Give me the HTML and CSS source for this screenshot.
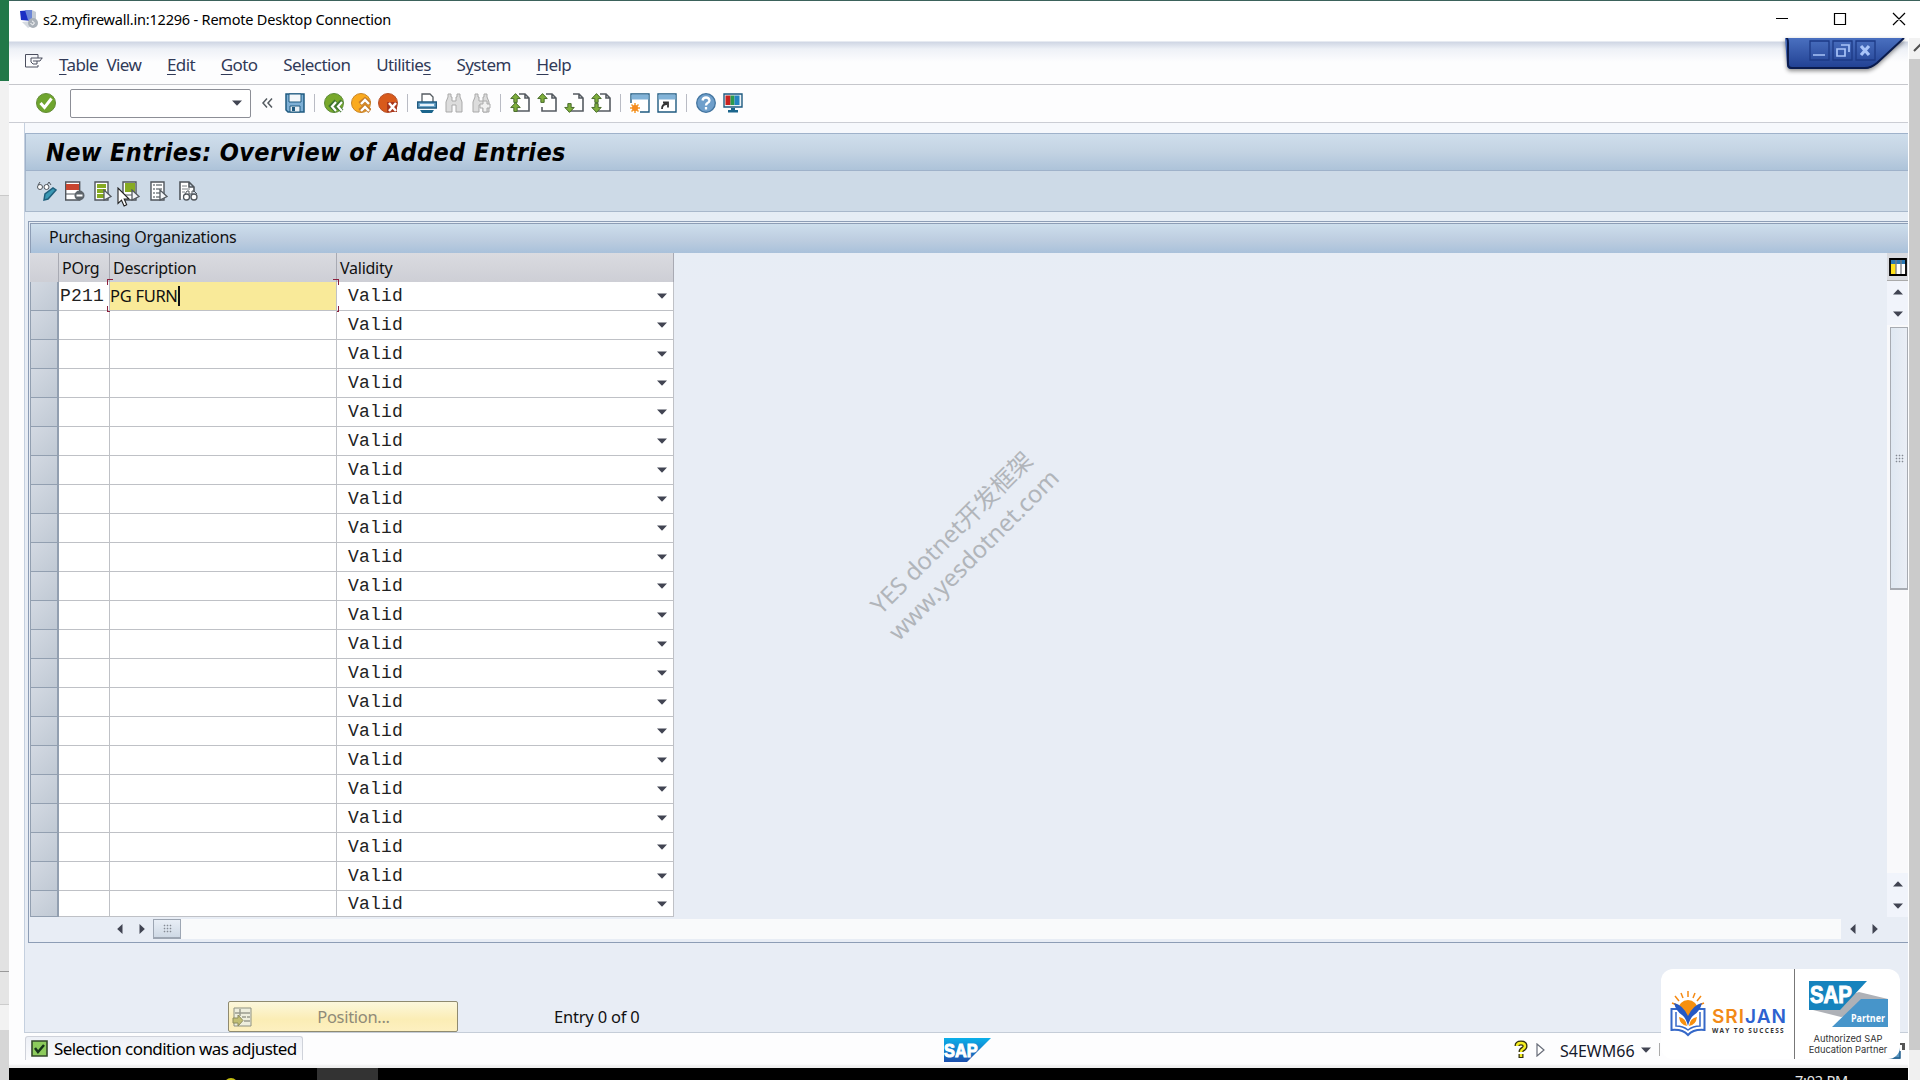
FILE: index.html
```html
<!DOCTYPE html>
<html lang="en">
<head>
  <meta charset="UTF-8">
  <title>s2.myfirewall.in:12296 - Remote Desktop Connection</title>
  <link rel="stylesheet" href="styles.css">
</head>
<body>
  <svg width="0" height="0" class="sprite">
    <linearGradient id="sapblue" x1="0" y1="0" x2="0" y2="1">
      <stop offset="0" stop-color="#0bb0ea"/><stop offset="1" stop-color="#1c4fae"/>
    </linearGradient>
    <symbol id="page" viewBox="0 0 20 20">
      <path d="M9 1h6l4 4v13H5v-4M15 1v4h4" fill="#fff" stroke="#555b61" stroke-width="1.6"/>
    </symbol>
    <symbol id="up" viewBox="0 0 10 9"><path d="M5 .5L9.3 5H6.5v3.5h-3V5H.7z" fill="#7fae3c" stroke="#486b2b" stroke-width=".9"/></symbol>
    <symbol id="bino" viewBox="0 0 20 20">
      <path d="M4 1h3v3h1v4h4V4h1V1h3v3l2 5v10h-6v-7H8v7H2V9l2-5z" fill="#dcdcdc" stroke="#a9a9a9"/>
    </symbol>
    <symbol id="caret" viewBox="0 0 10 6"><path d="M0 .5h10L5 5.8z" fill="#414452"/></symbol>
    <symbol id="play" viewBox="0 0 9 12"><path d="M1 1v10l7-3.500z" fill="#f4f6f8" stroke="#555b61" stroke-width="1.3"/></symbol>
  </svg>

  <div class="desktop">
    <div class="behind">
      <i class="b-green"></i><i class="b-head"></i><i class="b-cells"></i><i class="b-tab"></i><i class="b-light"></i><i class="b-end"></i>
    </div>

    <div class="window">
      <div class="rdp-title">
        <svg class="rdp-icon" viewBox="0 0 20 20">
          <path d="M1 2l12-1v11L2 11z" fill="#1b2fc4"/><path d="M6 1l7 0v11l-4-1z" fill="#6c86d6"/>
          <path d="M13 1l4 2v10l-4-1z" fill="#c3cad4"/><path d="M3 13l9-1 4 3-7 4z" fill="#d5dae1"/>
          <circle cx="14" cy="14" r="5" fill="#a9b0b8"/><path d="M11.500 14l2 2M13 11.800l2.500 2-2 2.500" stroke="#fff" fill="none"/>
        </svg>
        <span class="rdp-text">s2.myfirewall.in:12296 - Remote Desktop Connection</span>
        <svg class="win-controls" viewBox="0 0 136 14" fill="none" stroke="#000" stroke-width="1.2">
          <path d="M1 6.500h12M59.500 1.500h11v11h-11zM118 1l12 12M130 1l-12 12"/>
        </svg>
      </div>

      <div class="content">
        <div class="session">
          <div class="menubar">
            <svg class="menu-icon" viewBox="0 0 18 14" fill="none" stroke="#4b4e5e"><path d="M13 4V.5H.5v12.500H13V11M6 4h11.500M17 4l-2 3h-3v3H8L6 8V4M8 7h4"/></svg>
            <span><u>T</u>able View</span><span><u>E</u>dit</span><span><u>G</u>oto</span><span>Se<u>l</u>ection</span><span>Utilitie<u>s</u></span><span>S<u>y</u>stem</span><span><u>H</u>elp</span>
          </div>

          <div class="toolbar">
            <svg class="ico ok" viewBox="0 0 20 20"><circle cx="10" cy="10" r="9.500" fill="#6fa52e" stroke="#648c37"/><path d="M4.500 10l4 4.500 7-9" fill="none" stroke="#fff" stroke-width="3"/></svg>
            <div class="command"><svg class="caret"><use href="#caret"/></svg></div>
            <svg class="chev" viewBox="0 0 12 12" fill="none" stroke="#555b61" stroke-width="1.500"><path d="M6 1.500L2 6l4 4.500M11 1.500L7 6l4 4.500"/></svg>
            <svg class="ico" viewBox="0 0 20 20"><path d="M1 1h18v18H3l-2-2z" fill="#7fb0d6" stroke="#1f5a80" stroke-width="1.500"/><path d="M4 1h12v8H4z" fill="#f3f7fa" stroke="#1f5a80"/><path d="M5 13h10v6H5z" fill="#e8eff4" stroke="#1f5a80"/><path d="M7 14h3v4H7z" fill="#1f5a80"/></svg>
            <i class="sep"></i>
            <div class="group">
              <svg class="ico" viewBox="0 0 20 20"><circle cx="10" cy="10" r="9.500" fill="#78a82b" stroke="#5b8b38"/><path d="M12 8L7 13l5 5M18 8l-5 5 5 5" fill="none" stroke="#3d7430" stroke-width="4"/><path d="M12 9l-4 4.500 4 4.500M18 9l-4 4.500 4 4.500" fill="none" stroke="#fff" stroke-width="2.200"/></svg>
              <svg class="ico" viewBox="0 0 20 20"><circle cx="10" cy="10" r="9.500" fill="#faaa1e" stroke="#c98526"/><path d="M9 11l5-4 5 4M9 18l5-4 5 4" fill="none" stroke="#c47b2c" stroke-width="5"/><path d="M10 11l4-4 4 4M10 18l4-4 4 4" fill="none" stroke="#fff" stroke-width="2.400"/></svg>
              <svg class="ico" viewBox="0 0 20 20"><circle cx="10" cy="10" r="9.500" fill="#d85a1b" stroke="#b4502a"/><path d="M9 9h10v10H9z" fill="#a8371d"/><path d="M11 10l7 8M18 10l-7 8" stroke="#fff" stroke-width="2.500"/></svg>
            </div>
            <i class="sep"></i>
            <div class="group">
              <svg class="ico" viewBox="0 0 20 20"><path d="M5 9V1h8l3 3v5" fill="#fff" stroke="#555b61" stroke-width="1.300"/><path d="M.7 9h18.600v6H.7z" fill="#6ba4ca" stroke="#1f5a80" stroke-width="1.400"/><path d="M3 12h14" stroke="#e6f2fa" stroke-width="2"/><path d="M3 17h14l-2 3H5z" fill="#1b658c"/></svg>
              <svg class="ico"><use href="#bino"/></svg>
              <svg class="ico" viewBox="0 0 20 20"><use href="#bino"/><path d="M12 8h4v3h3v4h-3v4h-4v-4H9v-4h3z" fill="#f0f0f0" stroke="#aaa"/></svg>
            </div>
            <i class="sep"></i>
            <div class="group">
              <svg class="ico" viewBox="0 0 20 20"><use href="#page"/><use href="#up" width="11" height="10"/><use href="#up" y="9" width="11" height="10"/></svg>
              <svg class="ico" viewBox="0 0 20 20"><use href="#page"/><use href="#up" width="11" height="10"/></svg>
              <svg class="ico" viewBox="0 0 20 20"><use href="#page"/><use href="#up" width="11" height="10" transform="translate(11 20) rotate(180)"/></svg>
              <svg class="ico" viewBox="0 0 20 20"><use href="#page"/><use href="#up" width="11" height="10"/><use href="#up" width="11" height="10" transform="translate(11 20) rotate(180)"/></svg>
            </div>
            <i class="sep"></i>
            <div class="group">
              <svg class="ico" viewBox="0 0 20 20"><path d="M1 1h18v18H1z" fill="#fff" stroke="#1f5a80" stroke-width="1.400"/><path d="M1.500 1.500h17v5h-17z" fill="#82b3d8"/><path d="M0 10h10v10H0z" fill="#fff"/><path d="M5 10v10M0 15h10M1.500 11.500l7 7M8.500 11.500l-7 7" stroke="#f39a2b" stroke-width="1.500"/><circle cx="5" cy="15" r="3" fill="#f58b1f"/></svg>
              <svg class="ico" viewBox="0 0 20 20"><path d="M1 1h18v18H1z" fill="#fff" stroke="#1f5a80" stroke-width="1.400"/><path d="M1.500 1.500h17v5h-17z" fill="#82b3d8"/><path d="M5 16q0-5 5-5M6 9.500h5v5" fill="none" stroke="#333" stroke-width="1.800"/></svg>
            </div>
            <i class="sep"></i>
            <div class="group">
              <svg class="ico" viewBox="0 0 20 20"><circle cx="10" cy="10" r="9.300" fill="#6f9fcb" stroke="#42749f" stroke-width="1.300"/><path d="M6.500 7.500Q7 4.500 10 4.500t3.500 3Q13.500 9 11.500 10 10 11 10 12.500M10 14v2.500" fill="none" stroke="#fff" stroke-width="2.300"/></svg>
              <svg class="ico" viewBox="0 0 20 20"><path d="M1 1h18v13H1z" fill="#eef3f6" stroke="#1f5a80" stroke-width="1.400"/><path d="M2.500 2.500h5v9.500h-5z" fill="#c9211e"/><path d="M7.500 2.500h4v9.500h-4z" fill="#2c9a4b"/><path d="M11.500 2.500h5v9.500h-5z" fill="#2485c0"/><path d="M8 15h4v2h3v2.500H5V17h3z" fill="#1b658c"/></svg>
            </div>
          </div>

          <div class="workspace">
            <h1>New Entries: Overview of Added Entries</h1>
            <div class="app-toolbar">
              <svg class="ico" viewBox="0 0 20 20" fill="none" stroke="#50565c"><circle cx="3" cy="6" r="2.500" fill="#fff"/><circle cx="9.500" cy="6" r="2.500" fill="#fff"/><path d="M1 4l2-3M10 4l2-3 2 3"/><path d="M7 19l1-6 8-6 3 2-8 9z" fill="#3a98b4" stroke="#1f5f7c" stroke-width="1.500"/></svg>
              <svg class="ico" viewBox="0 0 20 20"><path d="M.7 1h14v18H.7z" fill="#fff" stroke="#50565c" stroke-width="1.400"/><path d="M1 3h13v6H1z" fill="#c8452f"/><path d="M1 13h12" stroke="#50565c"/><circle cx="14.500" cy="14.500" r="5" fill="#5d646a"/><path d="M11.500 14.500h6" stroke="#fff" stroke-width="2"/></svg>
              <svg class="ico" viewBox="0 0 20 20"><path d="M2 1h13v18H2z" fill="#fff" stroke="#50565c" stroke-width="1.400"/><path d="M4 3h9v4H4zM4 8h9v4H4zM4 13h8v4H4z" fill="#87ab22"/><use href="#play" x="10" y="8" width="9" height="12"/></svg>
              <svg class="ico" viewBox="0 0 20 20"><path d="M2 1h13v18H2z" fill="#fff" stroke="#50565c" stroke-width="1.400"/><path d="M4 2h10v9H4z" fill="#87ab22"/><path d="M4 14h7" stroke="#50565c"/><use href="#play" x="10" y="8" width="9" height="12"/></svg>
              <svg class="ico" viewBox="0 0 20 20"><path d="M2 1h13v18H2z" fill="#fff" stroke="#50565c" stroke-width="1.400"/><path d="M4 4h2M7 4h6M4 8h2M7 8h6M4 12h2M7 12h4M4 16h2M7 16h4" stroke="#7c8287" stroke-width="1.400"/><use href="#play" x="10" y="8" width="9" height="12"/></svg>
              <svg class="ico last" viewBox="0 0 20 20"><path d="M2 19V1h9l5 5v5M11 1v5h5" fill="#fff" stroke="#50565c" stroke-width="1.600"/><path d="M4 5h5M4 8h8M4 11h3" stroke="#7c8287"/><path d="M7 13l2-3h2v3h3v-3h2l3 3" fill="none" stroke="#50565c"/><circle cx="8.500" cy="16" r="3" fill="#fff" stroke="#50565c" stroke-width="1.300"/><circle cx="16" cy="16" r="3" fill="#fff" stroke="#50565c" stroke-width="1.300"/></svg>
            </div>

            <div class="table-box">
              <div class="box-title">Purchasing Organizations</div>
              <div class="table-area">
                <div class="grid" id="grid">
                  <div class="row head"><span></span><span>POrg</span><span>Description</span><span>Validity</span></div>
                </div>
                <div class="vscroll">
                  <div class="config"><svg viewBox="0 0 18 18"><path d="M1 1h16v16H1z" fill="#fff"/><path d="M1 1h16v5H1z" fill="#2b79b5"/><path d="M1 6h6v11H1z" fill="#ffe11c"/><path d="M7 1v16M12 1v16" stroke="#777c84" stroke-width="1.300"/><path d="M1 1h16v16H1z" fill="none" stroke="#000" stroke-width="1.800"/></svg></div>
                  <div class="arrow"><svg class="caret flip"><use href="#caret"/></svg></div>
                  <div class="arrow"><svg class="caret"><use href="#caret"/></svg></div>
                  <div class="vtrack"><div class="vthumb"><i class="grip"></i></div></div>
                  <div class="arrow"><svg class="caret flip"><use href="#caret"/></svg></div>
                  <div class="arrow"><svg class="caret"><use href="#caret"/></svg></div>
                </div>
              </div>
              <div class="hscroll">
                <svg class="caret left"><use href="#caret"/></svg>
                <svg class="caret right"><use href="#caret"/></svg>
                <div class="htrack"><div class="hthumb"><i class="grip"></i></div></div>
                <svg class="caret left"><use href="#caret"/></svg>
                <svg class="caret right"><use href="#caret"/></svg>
              </div>
            </div>

            <div class="footer">
              <button class="position">
                <svg viewBox="0 0 20 20"><path d="M2 1h17v18H2z" fill="#eeeedd" stroke="#8e9182"/><path d="M3 6h15M8 2v7M10 10h4M15 10h3M12 14h6" stroke="#9a9c8f" stroke-width="1.500"/><path d="M1 11h5V8l5 5.500L6 19v-3H1z" fill="#c2bf74" stroke="#8e8d5f"/></svg>
                <span>Position...</span>
              </button>
              <span class="entry">Entry 0 of 0</span>
            </div>
          </div>

          <div class="statusbar">
            <div class="message">
              <svg viewBox="0 0 17 17"><path d="M1 1h15v15H1z" fill="#8ccb5c" stroke="#33482b" stroke-width="1.600"/><path d="M4 8l3 4 6-7" fill="none" stroke="#17351a" stroke-width="2.500"/></svg>
              <span>Selection condition was adjusted</span>
            </div>
            <svg class="sap-logo" viewBox="0 0 49 25"><path d="M0 0h49L24 25H0z" fill="url(#sapblue)"/><text x="0" y="20" textLength="35" lengthAdjust="spacingAndGlyphs" class="sap-word">SAP</text></svg>
            <div class="system">
              <svg class="hint" viewBox="0 0 14 19"><path d="M3 6q0-3 4-3t4 3q0 2-2 3t-2 3M7 14v4" fill="none" stroke="#34310d" stroke-width="5"/><path d="M3 6q0-3 4-3t4 3q0 2-2 3t-2 3M7 14v3" fill="none" stroke="#f5ee23" stroke-width="2.500"/></svg>
              <svg class="tri" viewBox="0 0 9 14"><path d="M1 1l7 6-7 6z" fill="#fff" stroke="#686d79" stroke-width="1.200"/></svg>
              <span>S4EWM66</span>
              <svg class="caret"><use href="#caret"/></svg>
              <i></i>
            </div>
          </div>
          <div class="taskbar"><i class="dot"></i><i class="task"></i><span>7:02 PM</span></div>
        </div>
        <div class="outer-scroll">
          <svg viewBox="0 0 11 21"><path d="M5 13l6-6 6 6" fill="none" stroke="#505050" stroke-width="2"/></svg>
          <div></div>
        </div>
      </div>
    </div>

    <svg class="mdi" viewBox="0 0 124 38">
      <linearGradient id="mdi" x1="0" y1="0" x2="0" y2="1"><stop offset="0" stop-color="#4a70c0"/><stop offset="1" stop-color="#203f91"/></linearGradient>
      <path d="M1 0h119L92 26q-6 5-12 5H7q-4 0-4-4z" fill="url(#mdi)"/>
      <path d="M2 0q2 0 2 5v21q0 4 4 4h73q6 0 12-5l27-25" fill="none" stroke="#0b1c4e" stroke-width="2"/>
      <g fill="none" stroke="#1d3a86" stroke-width="1.300"><path d="M26 3h19v19H26zM49 3h19v19H49zM72 3h19v19H72z"/></g>
      <g fill="none" stroke="#a9c4f8" stroke-width="1.700"><path d="M29 17h12M53 11h8v7h-8zM57 7h8v7"/><path d="M77 8l8 9M85 8l-8 9" stroke-width="3.200"/></g>
    </svg>

    <div class="watermark">YES dotnet开发框架<br>www.yesdotnet.com</div>

    <svg class="cursor" viewBox="0 0 14 21"><path d="M1 1v15.500l3.500-3.300 2.600 5.800 2.600-1.200L7.200 12H12z" fill="#fff" stroke="#222" stroke-width="1.100"/></svg>

    <svg class="corner" viewBox="0 0 24 26"><path d="M19 10h5v7h-3v-5h-2z" fill="#555"/><path d="M2 26l17-12v12z" fill="#5794bf"/><path d="M3 25h16V18" fill="none" stroke="#245f8d" stroke-width="1.500"/></svg>
    <div class="badge">
      <div class="srijan">
        <svg viewBox="0 0 36 46">
          <g stroke="#f58a14" stroke-width="1.500"><path d="M18 6V0M13 7l-2-5M23 7l2-5M9 10L5 5M27 10l4-5M7 14l-5-2M29 14l5-2"/></g>
          <path d="M8 19a10 10 0 0 1 20 0L18 27z" fill="#f7900f"/>
          <path d="M7 18H1.500v21q11-1 16.500 5 5.500-6 16.500-5V18H29" fill="none" stroke="#3568c8" stroke-width="2"/>
          <path d="M6 21v14q7 0 12 4 5-4 12-4V21" fill="none" stroke="#3568c8" stroke-width="1.500"/>
          <path d="M4 12q9 2 14 13 5-11 14-13-2 8-8 12-4 3-6 11-2-8-6-11-6-4-8-12z" fill="#2559c4"/>
          <path d="M9 26q7 1 8 9-7-1-8-9zM27 26q-7 1-8 9 7-1 8-9z" fill="#f7900f"/>
        </svg>
        <div>
          <b><em>SRI</em>JAN</b>
          <small>WAY TO SUCCESS</small>
        </div>
      </div>
      <div class="partner">
        <svg viewBox="0 0 80 46">
          <path d="M0 28l50-17 29 7v10L32 36z" fill="#aeb1b7"/>
          <path d="M0 0h58L31 29H0z" fill="#1683bd"/>
          <path d="M52 18h27v28H23z" fill="#4795ca"/>
          <text x="1" y="22" textLength="42" lengthAdjust="spacingAndGlyphs" class="partner-sap">SAP</text>
          <text x="42" y="41" textLength="34" lengthAdjust="spacingAndGlyphs" class="partner-word">Partner</text>
        </svg>
        <p>Authorized SAP<br>Education Partner</p>
      </div>
    </div>
  </div>

  <script>
    const grid = document.getElementById("grid");
    for (let i = 0; i < 22; i++) {
      const row = document.createElement("div");
      row.className = "row";
      row.innerHTML = `
        <span class="select"></span>
        <span class="porg">${i === 0 ? "P211" : ""}</span>
        <span class="desc${i === 0 ? " active" : ""}">${i === 0 ? '<label>PG FURN</label><i></i><i></i><i></i><i></i>' : ""}</span>
        <span class="valid">Valid<svg class="caret"><use href="#caret"/></svg></span>
      `;
      grid.appendChild(row);
    }
  </script>
</body>
</html>
```
FILE: styles.css
```css
* {
  box-sizing: border-box;
}

body {
  margin: 0;
  overflow: hidden;
  font-family: "Noto Sans", "Open Sans", sans-serif;
  font-size: 17px;
  color: #111;
}

svg {
  display: block;
  flex: none;
}

.sprite {
  position: absolute;
}

.desktop {
  position: relative;
  width: 1920px;
  height: 1080px;
  display: flex;
  overflow: hidden;
}

/* spreadsheet peeking out on the left */
.behind {
  width: 9px;
  display: flex;
  flex-direction: column;
}

.b-green { height: 81px; background: #217848; }
.b-head { height: 114px; background: #f1f1f1; }
.b-cells { flex: 1; background: #e2e2e2; border-top: 1px solid #c9c9c9; }
.b-tab { height: 33px; background: #e5e5e5; border-top: 1px solid #999; }
.b-light { height: 26px; background: #f2f2f2; border-top: 1px solid #ccc; }
.b-end { height: 50px; background: #d6d6d6; }

.window {
  flex: 1;
  display: flex;
  flex-direction: column;
  border-top: 1px solid #3b625b;
}

.rdp-title {
  height: 37px;
  display: flex;
  align-items: center;
  background: #fff;
  padding: 0 9px 1px 10px;
}

.rdp-icon {
  width: 20px;
  height: 20px;
}

.rdp-text {
  margin-left: 4px;
  font-size: 14.5px;
  letter-spacing: -0.2px;
  color: #000;
  flex: 1;
}

.win-controls {
  width: 136px;
  height: 14px;
}

.content {
  flex: 1;
  display: flex;
}

.session {
  width: 1900px;
  height: 1042px;
  display: flex;
  flex-direction: column;
  background: #fdfdfe;
  border-right: 1px solid #fff;
}

.menubar {
  height: 47px;
  display: flex;
  align-items: center;
  gap: 25.8px;
  padding: 7px 0 0 16px;
  letter-spacing: -0.6px;
  word-spacing: 4.5px;
  color: #313a58;
  border-bottom: 1px solid #c6c7cc;
  background: linear-gradient(#fff 0, #fff 3px, #cfd6e4 4px, #eef1f7 11px, #fdfdfe 24px);
}

.menubar u {
  text-underline-offset: 3px;
}

.menu-icon {
  width: 18px;
  height: 14px;
  margin: -8px -9.8px 0 0;
}

.toolbar {
  height: 38px;
  display: flex;
  align-items: center;
  padding: 0 0 1px 27px;
  border-bottom: 1px solid #cbcdd4;
}

.ico {
  width: 20px;
  height: 20px;
}

.ico.last {
  margin-left: 1px;
}

.command {
  width: 181px;
  height: 29px;
  margin: 0 10px 0 14px;
  padding-right: 8px;
  border: 1px solid #8c8e96;
  border-radius: 2px;
  background: #fff;
  display: flex;
  align-items: center;
  justify-content: flex-end;
}

.caret {
  width: 10px;
  height: 6px;
}

.flip { transform: rotate(180deg); }
.left { transform: rotate(90deg); }
.right { transform: rotate(-90deg); }

.chev {
  width: 12px;
  height: 12px;
  margin-right: 12px;
}

.sep {
  width: 1px;
  height: 18px;
  margin: 0 9px;
  background: #b9bbc4;
}

.group {
  display: flex;
  gap: 7px;
}

.workspace {
  flex: 1;
  display: flex;
  flex-direction: column;
  margin-left: 15px;
  padding-top: 10px;
  border-left: 1px solid #c5d0df;
  border-bottom: 1px solid #c5cdd8;
  background: linear-gradient(#f6f8fc 0, #f6f8fc 10px, #e3edf5 11px, #e8edf5 160px);
}

h1 {
  height: 38px;
  margin: 0;
  padding-left: 20px;
  font: italic bold 25px/37px "DejaVu Sans Condensed", "DejaVu Sans", sans-serif;
  font-stretch: condensed;
  letter-spacing: 0.36px;
  color: #000;
  border: 1px solid #9fb2ca;
  border-right: 0;
  background: linear-gradient(#cfdeec, #c3d3e3 50%, #adc3d9);
}

.app-toolbar {
  height: 41px;
  display: flex;
  align-items: center;
  gap: 8px;
  padding-left: 11px;
  background: #cddae7;
  border-bottom: 1px solid #a8b8cb;
  border-left: 1px solid #a8b8cb;
}

.table-box {
  height: 722px;
  margin: 9px 0 0 3px;
  border: 1px solid #8d9db5;
  border-right: 0;
  display: flex;
  flex-direction: column;
}

.box-title {
  height: 30px;
  margin: 1px 0 0 1px;
  padding-left: 18px;
  font-size: 16px;
  line-height: 26px;
  letter-spacing: -0.25px;
  border: 1px solid #8d9db5;
  border-width: 1px 0 0 1px;
  background: linear-gradient(#cddeec, #bdcde0 55%, #a9c1da);
}

.table-area {
  height: 664px;
  display: flex;
  justify-content: space-between;
  margin-left: 1px;
}

.grid {
  width: 644px;
  height: 664px;
  overflow: hidden;
}

.row {
  display: grid;
  grid-template-columns: 29px 51px 227px 337px;
  height: 29px;
}

.row:last-child {
  height: 26px;
}

.row span {
  border-right: 1px solid #bfc1c6;
  border-bottom: 1px solid #bfc1c6;
  background: #fff;
  line-height: 28px;
}

.row.head span {
  background: linear-gradient(#dadbe0, #cdced5);
  border-color: #a8aab3;
  line-height: 30px;
  padding-left: 3px;
  font-size: 16px;
  letter-spacing: -0.25px;
}

.row .select {
  border: 1px solid #929fb0;
  border-width: 0 2px 1px 1px;
  background: linear-gradient(135deg, #d3d9e2, #c0c9d4);
}

.row .porg,
.row .valid {
  font-family: "Liberation Mono", monospace;
  font-size: 18px;
  letter-spacing: 0.2px;
  color: #222;
}

.row .porg {
  padding-left: 1px;
}

.row .valid {
  padding: 0 6px 0 11px;
  display: flex;
  align-items: center;
  justify-content: space-between;
}

.row:last-child .valid {
  line-height: 24px;
}

.row .desc {
  position: relative;
}

.row .active {
  background: #f9ea99;
}

.active label {
  border-right: 2px solid #111;
  line-height: 20px;
  display: inline-block;
  font-size: 16.5px;
  letter-spacing: -0.3px;
}

/* focus corners */
.active i {
  position: absolute;
  width: 6px;
  height: 6px;
  border: 0 solid #8c1f3c;
}

.active i:nth-of-type(1) { left: -3px; top: -3px; border-width: 1px 0 0 1px; }
.active i:nth-of-type(2) { right: -3px; top: -3px; border-width: 1px 1px 0 0; }
.active i:nth-of-type(3) { left: -3px; bottom: -2px; border-width: 0 0 1px 1px; }
.active i:nth-of-type(4) { right: -3px; bottom: -2px; border-width: 0 1px 1px 0; }

.vscroll {
  width: 21px;
  display: flex;
  flex-direction: column;
  background: #f9f9fb;
}

.config {
  height: 28px;
  padding: 5px 0 0 2px;
  background: #d9dbe0;
  border-bottom: 1px solid #aaa;
}

.config svg {
  width: 18px;
  height: 18px;
}

.arrow {
  height: 22px;
  display: flex;
  align-items: center;
  justify-content: center;
  background: #f1f4fb;
}

.vtrack {
  flex: 1;
  padding: 2px 0 0 3px;
}

.vthumb {
  height: 263px;
  border: 1px solid #a7abb2;
  border-bottom-width: 2px;
  background: linear-gradient(90deg, #dfe8f2, #eaeef5);
  display: flex;
  align-items: center;
  justify-content: center;
}

.grip {
  width: 9px;
  height: 9px;
  background: radial-gradient(circle, #858a94 0, #858a94 0.7px, transparent 1.1px) 0 0 / 3px 3px;
}

.hscroll {
  flex: 1;
  display: flex;
  align-items: center;
  padding: 0 28px 2px 86px;
}

.hscroll .right {
  margin-left: 12px;
}

.htrack {
  flex: 1;
  height: 20px;
  margin: 0 7px 0 6px;
  background: #f9fafb;
}

.hthumb {
  width: 28px;
  height: 20px;
  border: 1px solid #9da6b3;
  border-bottom-width: 2px;
  background: linear-gradient(#e8eef6, #cfd9e5);
  display: flex;
  align-items: center;
  justify-content: center;
}

.footer {
  display: flex;
  align-items: center;
  margin: 58px 0 0 203px;
}

.position {
  width: 230px;
  height: 31px;
  display: flex;
  align-items: center;
  padding: 0 2px 0 3px;
  border: 1px solid #8f8a70;
  border-radius: 2px;
  background: linear-gradient(#fcf7dc, #fbedb5 60%, #fdf0c0);
  font: 16.5px "Noto Sans", sans-serif;
  letter-spacing: -0.3px;
  color: #8f8a78;
}

.position svg {
  width: 20px;
  height: 20px;
}

.position span {
  flex: 1;
  text-align: center;
}

.entry {
  margin-left: 96px;
  font-size: 16.5px;
  letter-spacing: -0.2px;
}

.statusbar {
  height: 35px;
  display: flex;
  align-items: flex-start;
  padding: 3px 0 0 16px;
  background: linear-gradient(#fdfdfe 31px, #efefef 33px);
}

.message {
  width: 278px;
  height: 24px;
  display: flex;
  align-items: center;
  gap: 6px;
  padding-left: 5px;
  border: 1px solid #cfd2da;
  border-bottom: 0;
  border-radius: 3px 3px 0 0;
  background: linear-gradient(#edf0f6, #fbfbfd);
  letter-spacing: -0.57px;
  white-space: nowrap;
  color: #000;
}

.message svg {
  width: 17px;
  height: 17px;
}

.sap-logo {
  width: 49px;
  height: 24px;
  margin: 2px 0 0 640px;
}

.sap-word {
  font: bold 19px "Liberation Sans", sans-serif;
  fill: #fff;
  stroke: #fff;
}

.system {
  display: flex;
  align-items: center;
  height: 27px;
  margin-left: 522px;
}

.hint {
  width: 14px;
  height: 19px;
  margin-right: 8px;
}

.tri {
  width: 9px;
  height: 14px;
  margin-right: 15px;
}

.system span {
  width: 76px;
  padding-top: 2px;
  font-size: 16px;
  color: #16192b;
}

.system .caret {
  margin-left: 5px;
}

.system i {
  width: 1px;
  height: 13px;
  margin-left: 8px;
  background: #aaa;
}

.taskbar {
  flex: 1;
  display: flex;
  align-items: flex-start;
  overflow: hidden;
  background: #000;
}

.dot {
  width: 14px;
  height: 14px;
  margin: 10px 0 0 215px;
  border-radius: 50%;
  background: #c3bd12;
}

.task {
  width: 61px;
  height: 12px;
  margin-left: 79px;
  background: #333;
}

.taskbar span {
  margin: 2px 0 0 1417px;
  font-size: 14.5px;
  line-height: 20px;
  letter-spacing: -0.2px;
  white-space: nowrap;
  color: #e8e8e8;
}

.outer-scroll {
  width: 11px;
  background: #f0f0f0;
}

.outer-scroll svg {
  width: 11px;
  height: 21px;
  background: #f2f2f2;
}

.outer-scroll div {
  height: 991px;
  background: #cbcbcb;
}

/* session window buttons hang over the menu bar */
.mdi {
  position: absolute;
  left: 1784px;
  top: 38px;
  width: 124px;
  height: 38px;
  filter: drop-shadow(0 2px 2px rgba(0, 0, 0, 0.45));
}

.watermark {
  position: absolute;
  left: 812px;
  top: 512px;
  width: 300px;
  text-align: center;
  font: 24px/31px "Noto Sans", "Noto Sans CJK SC", sans-serif;
  color: #b1b5ba;
  transform: rotate(-45deg);
}

.cursor {
  position: absolute;
  left: 117px;
  top: 187px;
  width: 14px;
  height: 21px;
}

.corner {
  position: absolute;
  left: 1881px;
  top: 1033px;
  width: 24px;
  height: 26px;
}

.badge {
  position: absolute;
  left: 1661px;
  top: 969px;
  width: 239px;
  height: 90px;
  display: flex;
  border-radius: 12px;
  background: #fff;
}

.srijan {
  width: 134px;
  display: flex;
  align-items: center;
  gap: 6px;
  padding-left: 9px;
  border-right: 1px solid #777;
}

.srijan svg {
  width: 36px;
  height: 46px;
}

.srijan div {
  padding-top: 15px;
}

.srijan b {
  display: block;
  font: 600 19px/18px "Inter", sans-serif;
  letter-spacing: 1px;
  color: #2d62d0;
}

.srijan em {
  font-style: normal;
  color: #f28a18;
}

.srijan small {
  display: block;
  font: bold 6.5px/9px "Open Sans", sans-serif;
  letter-spacing: 1.3px;
  white-space: nowrap;
  color: #333;
}

.partner {
  flex: 1;
  padding: 12px 0 0 14px;
}

.partner svg {
  width: 80px;
  height: 46px;
}

.partner-sap {
  font: bold 23px "Liberation Sans", sans-serif;
  fill: #fff;
  stroke: #fff;
}

.partner-word {
  font: bold 10px "Open Sans", sans-serif;
  fill: #fff;
}

.partner p {
  width: 80px;
  margin: 7px 0 0 -1px;
  font: 9.3px/10.5px "Inter", sans-serif;
  text-align: center;
  white-space: nowrap;
  color: #333;
}
```
